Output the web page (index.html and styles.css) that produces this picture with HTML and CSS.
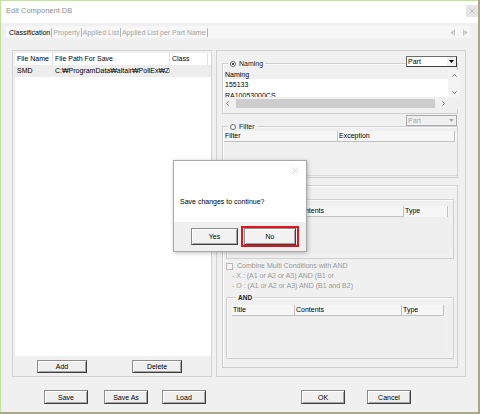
FILE: index.html
```html
<!DOCTYPE html>
<html lang="en">
<head>
  <meta charset="UTF-8">
  <title>Edit Component DB</title>
  <link rel="stylesheet" href="styles.css">
</head>
<body>
  <div class="window">
    <div class="titlebar">
      <span class="title">Edit Component DB</span>
      <span class="close"><svg width="6" height="6" viewBox="0 0 6 6"><path d="M0.5 0.5L5.5 5.5M5.5 0.5L0.5 5.5" stroke="#b4b4b4" stroke-width="0.8"/></svg></span>
    </div>

    <!-- tab strip -->
    <div class="tabs">
      <span class="tab active">Classification</span><span class="tab">Property</span><span class="tab">Applied List</span><span class="tab">Applied List per Part Name</span><span class="tab"></span>
      <span class="tab-arrows">
        <svg width="18" height="7" viewBox="0 0 18 7">
          <path d="M0.5 3.5L3.5 0.8V6.2Z" fill="#c4c4c4"/><path d="M4.5 0.5V6.5" stroke="#c4c4c4"/>
          <path d="M13.5 0.5V6.5" stroke="#c4c4c4"/><path d="M17.5 3.5L14.5 0.8V6.2Z" fill="#c4c4c4"/>
        </svg>
      </span>
    </div>

    <div class="main">
      <!-- file list -->
      <div class="panel left-panel">
        <div class="file-list">
          <div class="fl-row fl-head">
            <span class="c-name">File Name</span><span class="c-path">File Path For Save</span><span class="c-class">Class</span>
          </div>
          <div class="fl-row sel">
            <span class="c-name">SMD</span><span class="c-path">C:₩ProgramData₩altair₩PollEx₩Zuken</span><span class="c-class"></span>
          </div>
        </div>
        <div class="panel-buttons">
          <button class="btn w50">Add</button>
          <button class="btn w50">Delete</button>
        </div>
      </div>

      <!-- conditions -->
      <div class="panel right-panel">
        <div class="group naming-group">
          <span class="group-title"><span class="radio on"></span>Naming</span>
          <div class="combo"><span class="combo-text">Part</span><span class="combo-btn"><svg width="5" height="3" viewBox="0 0 5 3"><path d="M0 0H5L2.5 3Z" fill="#000"/></svg></span></div>
          <div class="nlist">
            <div class="nlist-body">
              <div class="nlist-head">Naming</div>
              <div class="nlist-row">155133</div>
              <div class="nlist-row">RA10053000CS</div>
            </div>
            <div class="vscroll">
              <svg width="5" height="3" viewBox="0 0 5 3"><path d="M0.3 2.7L2.5 0.5L4.7 2.7" stroke="#555" fill="none" stroke-width="0.8"/></svg>
              <svg width="5" height="3" viewBox="0 0 5 3"><path d="M0.3 0.3L2.5 2.5L4.7 0.3" stroke="#555" fill="none" stroke-width="0.8"/></svg>
            </div>
            <div class="hscroll">
              <svg width="3" height="5" viewBox="0 0 3 5"><path d="M2.7 0.3L0.5 2.5L2.7 4.7" stroke="#555" fill="none" stroke-width="0.8"/></svg>
              <span class="thumb"></span>
              <svg width="3" height="5" viewBox="0 0 3 5"><path d="M0.3 0.3L2.5 2.5L0.3 4.7" stroke="#555" fill="none" stroke-width="0.8"/></svg>
            </div>
            <div class="corner"></div>
          </div>
        </div>

        <div class="group filter-group">
          <span class="group-title"><span class="radio"></span>Filter</span>
          <div class="combo disabled"><span class="combo-text">Part</span><span class="combo-btn"><svg width="5" height="3" viewBox="0 0 5 3"><path d="M0 0H5L2.5 3Z" fill="#a8a8a8"/></svg></span></div>
          <div class="table filter-table">
            <div class="t-head"><span class="w114">Filter</span><span class="w117">Exception</span></div>
            <div class="t-body"></div>
          </div>
        </div>

        <div class="group cond-group">
          <div class="subgroup or-box">
            <div class="table or-table">
              <div class="t-head"><span class="w67">Title</span><span class="w109">Contents</span><span class="w44">Type</span></div>
              <div class="t-body"></div>
            </div>
          </div>
          <div class="opts">
            <div class="opt-line"><span class="check"></span>Combine Multi Conditions with AND</div>
            <div class="opt-line indent">- X : (A1 or A2 or A3) AND (B1 or</div>
            <div class="opt-line indent">- O : (A1 or A2 or A3) AND (B1 and B2)</div>
          </div>
          <div class="subgroup and-box">
            <span class="group-title bold">AND</span>
            <div class="table and-table">
              <div class="t-head"><span class="w63">Title</span><span class="w107">Contents</span><span class="w42">Type</span></div>
              <div class="t-body"></div>
            </div>
          </div>
        </div>
      </div>
    </div>

    <div class="footer">
      <button class="btn w44">Save</button>
      <button class="btn w44 ml16">Save As</button>
      <button class="btn w44 ml14">Load</button>
      <button class="btn w44 ml95">OK</button>
      <button class="btn w44 ml22">Cancel</button>
    </div>
  </div>

  <!-- message box over the window -->
  <div class="msgbox">
    <div class="msg-top">
      <span class="msg-close"><svg width="7" height="7" viewBox="0 0 7 7"><path d="M0.5 0.5L6.5 6.5M6.5 0.5L0.5 6.5" stroke="#c2c2c2" stroke-width="0.7"/></svg></span>
      <p class="msg-text">Save changes to continue?</p>
    </div>
    <div class="msg-foot">
      <button class="btn msg-btn yes">Yes</button>
      <span class="focus-ring"><button class="btn msg-btn no">No</button></span>
    </div>
  </div>
</body>
</html>
```

FILE: styles.css
```css
body {
  margin: 0;
  width: 480px;
  height: 414px;
  background-color: #a9a68c;
  font-family: "Liberation Sans", Arial, sans-serif;
  font-size: 7px;
  color: #000;
  position: relative;
  overflow: hidden;
}
.window {
  box-sizing: border-box;
  width: 478px;
  height: 412px;
  background-color: #f0f0f0;
  border-left: 1px solid #c2e29a;
  border-top: 1px solid #c2e29a;
}
.titlebar {
  height: 22px;
  background-color: #fff;
  display: flex;
  align-items: flex-start;
}
.title {
  margin: 5px 0 0 5px;
  font-size: 7.5px;
  line-height: 9px;
  color: #8e8e8e;
}
.close {
  margin: 4px 0 0 auto;
  width: 12px;
  height: 12px;
  background-color: #e6e6e6;
  display: flex;
  align-items: center;
  justify-content: center;
}

/* tabs */
.tabs {
  margin: 3px 0 0 5px;
  width: 464px;
  height: 12px;
  background-color: #f7f7f7;
  display: flex;
  align-items: center;
  line-height: 12px;
}
.tab {
  color: #a4a4a4;
  padding: 0 1px;
  border-right: 1px solid #b4b4b4;
  line-height: 9px;
}
.tab.active {
  color: #000;
  padding-left: 3px;
}
.tab-arrows {
  margin: 0 2px 0 auto;
  display: flex;
}

.main {
  margin-top: 12px;
  padding-left: 11px;
  height: 327px;
  display: flex;
}
.panel {
  box-sizing: border-box;
  height: 327px;
  border: 1px solid #d2d2d2;
}
.left-panel {
  width: 200px;
  padding: 2px 0 0 2px;
}
.right-panel {
  width: 250px;
  margin-left: 4px;
  padding-left: 5px;
}

/* file list */
.file-list {
  width: 196px;
  height: 303px;
  background-color: #fff;
}
.fl-row {
  display: flex;
  height: 12px;
  line-height: 12px;
}
.fl-row span {
  box-sizing: border-box;
  padding-left: 2px;
  white-space: nowrap;
  overflow: hidden;
}
.fl-head span {
  border-right: 1px solid #e3e3e3;
}
.fl-row.sel {
  background-color: #ededed;
}
.c-name { width: 38px; }
.c-path { width: 117px; }
.c-class { width: 38px; }
.panel-buttons {
  margin-top: 4px;
  padding-left: 22px;
  display: flex;
  gap: 45px;
}

/* buttons */
.btn {
  box-sizing: border-box;
  height: 13px;
  padding: 0;
  font-family: inherit;
  font-size: 7px;
  color: #000;
  background-color: #efefef;
  border: 1px solid #8c8c8c;
  border-right-color: #3e3e3e;
  border-bottom-color: #3e3e3e;
  box-shadow: inset 1px 1px #fff, inset -1px -1px #a6a6a6;
}
.w50 { width: 50px; }
.w44 { width: 44px; height: 14px; }
.ml16 { margin-left: 16px; }
.ml14 { margin-left: 14px; }
.ml95 { margin-left: 95px; }
.ml22 { margin-left: 22px; }

.footer {
  margin-top: 13px;
  padding-left: 43px;
  display: flex;
}

/* group boxes */
.group, .subgroup {
  box-sizing: border-box;
  position: relative;
  border: 1px solid #d0d0d0;
  box-shadow: inset 1px 1px #fafafa;
}
.group {
  width: 236px;
}
.group-title {
  position: absolute;
  top: -5px;
  left: 5px;
  padding: 0 2px;
  background-color: #f0f0f0;
  display: flex;
  align-items: center;
  gap: 3px;
  line-height: 9px;
  color: #222;
}
.group-title.bold {
  font-weight: bold;
  font-size: 6.5px;
  left: 9px;
}
.radio {
  box-sizing: border-box;
  width: 6px;
  height: 6px;
  border: 1px solid #6a6a6a;
  border-radius: 50%;
  background-color: #fff;
  position: relative;
}
.radio.on::after {
  content: "";
  position: absolute;
  left: 1px;
  top: 1px;
  width: 2px;
  height: 2px;
  border-radius: 50%;
  background-color: #111;
}
.combo {
  position: absolute;
  top: -8px;
  right: 0;
  box-sizing: border-box;
  width: 51px;
  height: 11px;
  background-color: #fff;
  border: 1px solid #6c6c6c;
  border-right-color: #3a3a3a;
  border-bottom-color: #3a3a3a;
  display: flex;
  line-height: 9px;
}
.combo-text {
  flex: 1;
  padding-left: 1px;
}
.combo-btn {
  width: 9px;
  background-color: #f0f0f0;
  display: flex;
  align-items: center;
  justify-content: center;
}
.combo.disabled {
  background-color: #f0f0f0;
  border-color: #acacac;
  color: #a8a8a8;
  top: -12px;
}

.naming-group {
  margin-top: 12px;
  height: 51px;
}
.nlist {
  margin: 6px 0 0 1px;
  width: 233px;
  height: 39px;
  display: grid;
  grid-template-columns: 1fr 12px;
  grid-template-rows: 27px 12px;
}
.nlist-body {
  overflow: hidden;
  background-color: #fff;
}
.nlist-head {
  height: 9px;
  line-height: 9px;
  background-color: #f0f0f0;
  padding-left: 1px;
}
.nlist-row {
  height: 11px;
  line-height: 12px;
  padding-left: 1px;
}
.vscroll {
  background-color: #f4f4f4;
  display: flex;
  flex-direction: column;
  align-items: center;
  justify-content: space-between;
  padding: 4px 0 3px;
}
.hscroll {
  background-color: #f0f0f0;
  display: flex;
  align-items: center;
  padding: 0 3px 0 2px;
  gap: 7px;
}
.thumb {
  width: 199px;
  height: 9px;
  background-color: #cdcdcd;
}
.corner {
  background-color: #f0f0f0;
}

.filter-group {
  margin-top: 12px;
  height: 52px;
}

/* list-view tables */
.table {
  display: flex;
  flex-direction: column;
}
.t-head {
  display: flex;
  height: 11px;
  line-height: 10px;
  background-color: #f6f6f6;
}
.t-head span {
  box-sizing: border-box;
  padding-left: 1px;
  border-right: 1px solid #c2c2c2;
  border-bottom: 1px solid #c2c2c2;
}
.t-body {
  flex: 1;
  background-color: #eeeeee;
}
.filter-table {
  margin: 4px 0 0 1px;
  height: 45px;
}
.filter-table .t-body {
  background-color: #f0f0f0;
  border-bottom: 1px solid #d8d8d8;
}
.w114 { width: 114px; }
.w117 { width: 117px; }
.w67 { width: 67px; }
.w109 { width: 109px; }
.w44 { width: 44px; }
.w63 { width: 63px; }
.w107 { width: 107px; }
.w42 { width: 42px; }

.cond-group {
  margin-top: 7px;
  height: 183px;
}
.subgroup {
  margin-left: 3px;
  width: 228px;
}
.or-box {
  margin-top: 13px;
  height: 60px;
}
.or-table {
  margin: 6px 0 0 1px;
  width: 221px;
  height: 48px;
}
.opts {
  margin: 2px 0 0 3px;
  color: #9a9a9a;
}
.opt-line {
  height: 10px;
  line-height: 10px;
  display: flex;
  align-items: center;
}
.opt-line.indent {
  padding-left: 6px;
}
.check {
  box-sizing: border-box;
  width: 7px;
  height: 7px;
  margin-right: 4px;
  border: 1px solid #b8b8b8;
  background-color: #f4f4f4;
}
.and-box {
  margin-top: 6px;
  height: 62px;
}
.and-table {
  margin: 7px 0 0 5px;
  width: 212px;
  height: 49px;
}

/* message box */
.msgbox {
  position: absolute;
  left: 173px;
  top: 160px;
  box-sizing: border-box;
  width: 134px;
  height: 92px;
  border: 1px solid #a8a8a8;
  box-shadow: 1px 1px 4px rgba(0, 0, 0, 0.25);
  display: flex;
  flex-direction: column;
}
.msg-top {
  height: 61px;
  background-color: #fff;
  display: flex;
  flex-direction: column;
}
.msg-close {
  align-self: flex-end;
  margin: 6px 7px 0 0;
  display: flex;
}
.msg-text {
  margin: 23px 0 0 6px;
  line-height: 9px;
}
.msg-foot {
  flex: 1;
  background-color: #f0f0f0;
  display: flex;
  align-items: flex-start;
  padding: 4px 0 0 17px;
  gap: 3px;
}
.msg-btn {
  height: 17px;
  background-color: #f2f2f2;
}
.msg-btn.yes {
  width: 47px;
  margin-top: 2px;
}
.focus-ring {
  border: 2px solid #e3141e;
  padding: 0 1px;
  display: flex;
}
.msg-btn.no {
  width: 52px;
}
```
